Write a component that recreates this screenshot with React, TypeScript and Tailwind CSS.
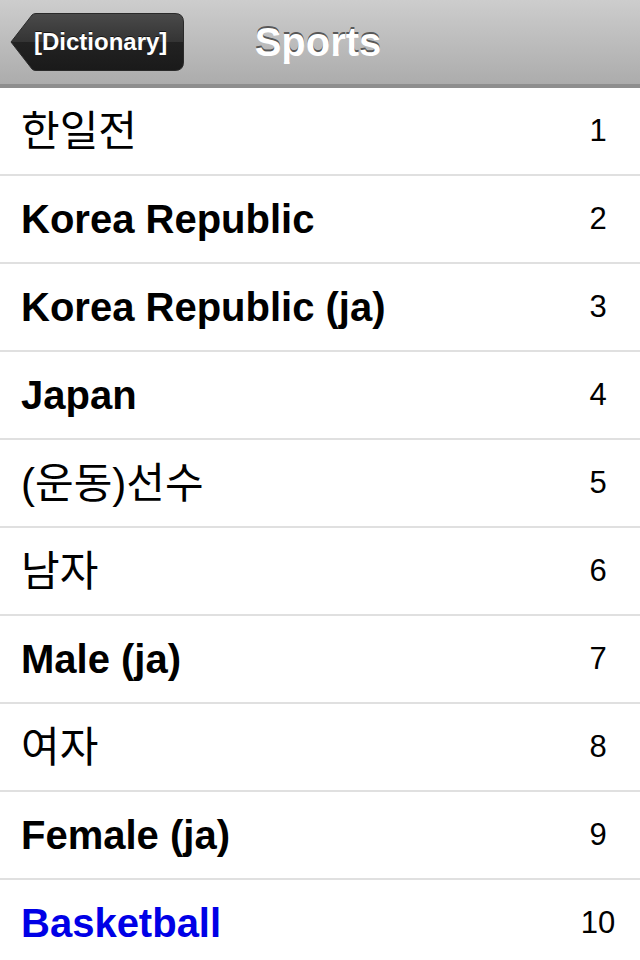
import React from "react";

interface Row {
  label: string;
  num: number;
  kind: "ko" | "en" | "link";
}

const rows: Row[] = [
  { label: "한일전", num: 1, kind: "ko" },
  { label: "Korea Republic", num: 2, kind: "en" },
  { label: "Korea Republic (ja)", num: 3, kind: "en" },
  { label: "Japan", num: 4, kind: "en" },
  { label: "(운동)선수", num: 5, kind: "ko" },
  { label: "남자", num: 6, kind: "ko" },
  { label: "Male (ja)", num: 7, kind: "en" },
  { label: "여자", num: 8, kind: "ko" },
  { label: "Female (ja)", num: 9, kind: "en" },
  { label: "Basketball", num: 10, kind: "link" },
];

function BackButton() {
  return (
    <div className="relative h-[58px] w-[174px] ml-[10px] flex items-center">
      <svg className="absolute inset-0" width="174" height="58" viewBox="0 0 174 58">
        <defs>
          <linearGradient id="bb" x1="0" y1="0" x2="0" y2="1">
            <stop offset="0" stopColor="#4a4a4a" />
            <stop offset="0.5" stopColor="#343434" />
            <stop offset="0.5" stopColor="#222222" />
            <stop offset="1" stopColor="#1a1a1a" />
          </linearGradient>
        </defs>
        <path
          d="M1 29 L22 2 Q23.5 0.5 26 0.5 L165 0.5 Q173.5 0.5 173.5 9 L173.5 49 Q173.5 57.5 165 57.5 L26 57.5 Q23.5 57.5 22 56 Z"
          fill="url(#bb)"
          stroke="#2a2a2a"
        />
      </svg>
      <span className="relative pl-[24px] text-white text-[24px] font-bold leading-none [text-shadow:0_-1px_0_rgba(0,0,0,0.6)]">
        [Dictionary]
      </span>
    </div>
  );
}

export default function App() {
  return (
    <div className="w-[640px] h-[960px] overflow-hidden bg-white font-['Liberation_Sans','Noto_Sans_CJK_KR',sans-serif]">
      <div className="relative h-[88px] bg-gradient-to-b from-[#cdcdcd] to-[#acacac] border-b-[4px] border-[#8e8e8e] flex items-center">
        <BackButton />
        <div className="absolute inset-x-0 top-0 h-[84px] flex items-center justify-center pointer-events-none">
          <span className="text-white text-[40px] font-bold leading-none [text-shadow:0_-2px_0_rgba(60,60,60,0.8)] ml-[-4px]">
            Sports
          </span>
        </div>
      </div>
      {rows.map((r) => (
        <div
          key={r.num}
          className="h-[88px] flex items-center justify-between pl-[21px] pr-[20px] border-b-2 border-[#e0e0e0]"
        >
          <span
            className={
              r.kind === "ko"
                ? "text-[42px] text-black font-normal"
                : r.kind === "link"
                ? "text-[40px] text-[#0000e6] font-bold"
                : "text-[40px] text-black font-bold"
            }
          >
            {r.label}
          </span>
          <span className="w-[44px] text-center text-[31px] text-black">{r.num}</span>
        </div>
      ))}
    </div>
  );
}
